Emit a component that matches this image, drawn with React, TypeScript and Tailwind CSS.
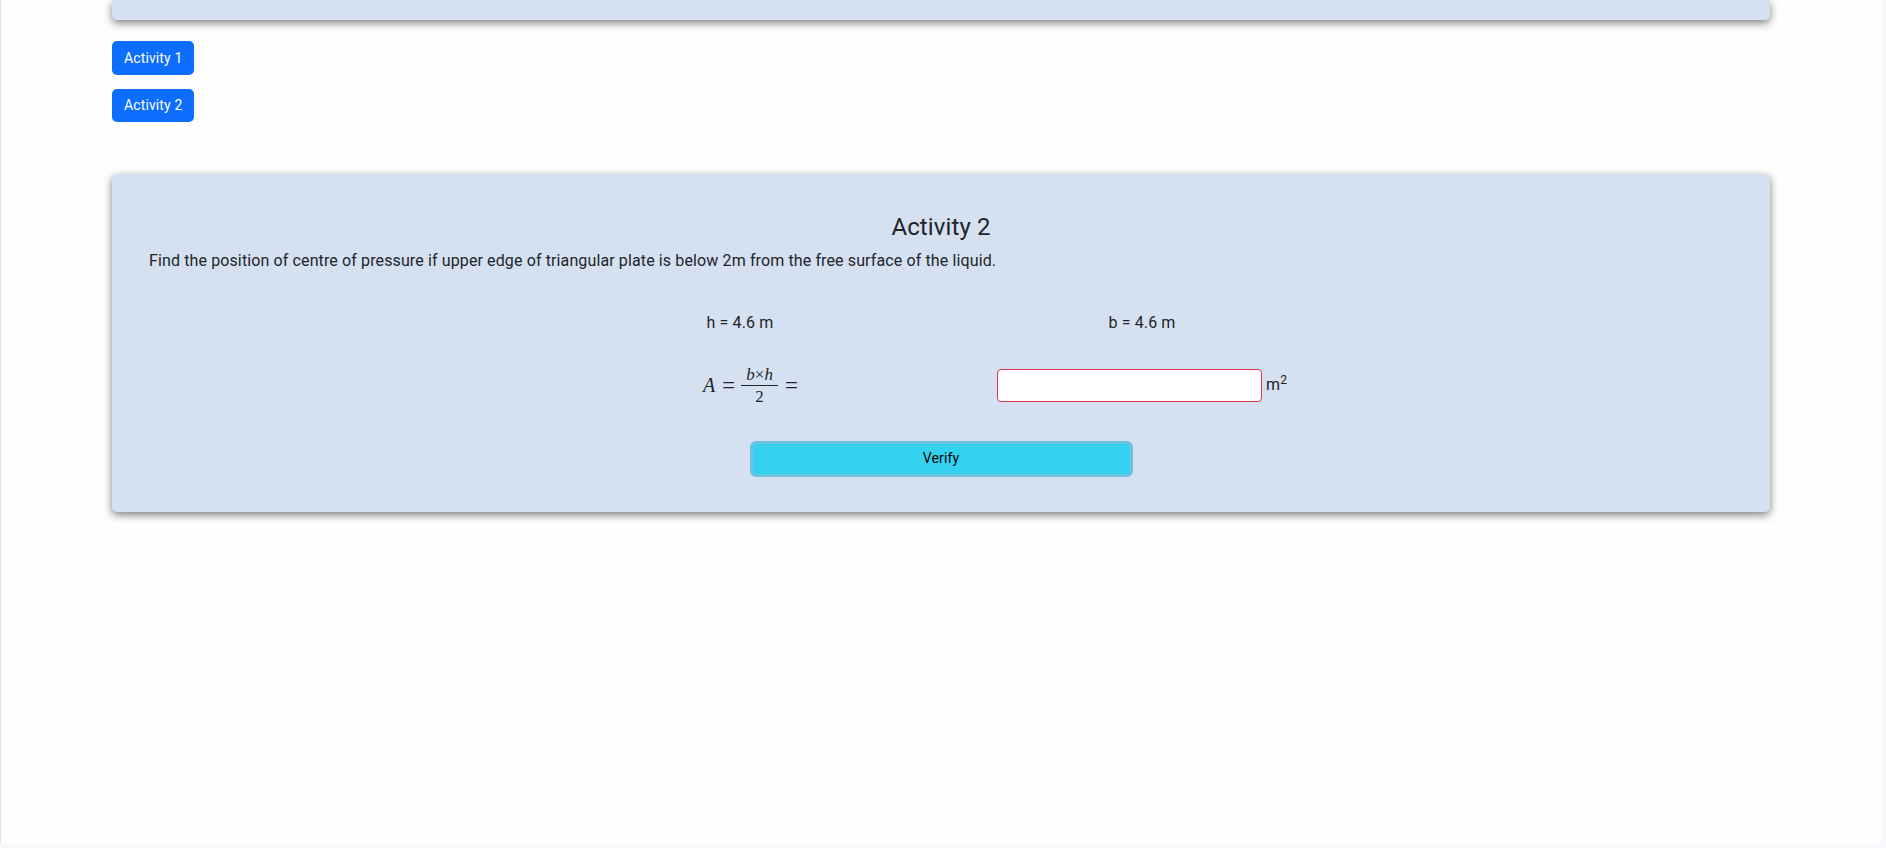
import React from "react";

export default function App() {
  return (
    <main className="min-h-screen bg-[#f7f8fc] font-['Roboto','Liberation_Sans',sans-serif] tracking-[0.12px] text-[#212529]">
      <div className="h-[843px] w-[1881px] overflow-hidden border-l border-[#dfe1e6] bg-[#fefefe]">
        <div className="px-[111px]">
          {/* previous activity card, scrolled mostly out of view */}
          <div className="h-[20px] rounded-b-[5px] bg-[#d5e0f1] shadow-[0_3px_8px_rgba(0,0,0,0.5)]" />

          {/* activity buttons */}
          <div className="mt-[21px] flex flex-col items-start gap-[14px]">
            <button className="h-[34px] rounded-[5px] bg-[#0d6efd] px-[12px] text-[14px] text-white">
              Activity 1
            </button>
            <button className="h-[33px] rounded-[5px] bg-[#0d6efd] px-[12px] text-[14px] text-white">
              Activity 2
            </button>
          </div>

          {/* activity 2 card */}
          <div className="mt-[52px] rounded-[5px] bg-[#d5e0f1] px-[37px] pt-[39px] pb-[35px] shadow-[0_3px_8px_rgba(0,0,0,0.5)]">
            <h3 className="text-center text-[24px] leading-[1.2] font-normal">
              Activity 2
            </h3>
            <p className="mt-[7px] text-[16px] leading-[24px]">
              Find the position of centre of pressure if upper edge of
              triangular plate is below 2m from the free surface of the liquid.
            </p>

            <div className="mx-auto mt-[38px] grid w-[804px] grid-cols-2 text-center text-[16px] leading-[24px]">
              <div>h = 4.6 m</div>
              <div>b = 4.6 m</div>

              <div className="mt-[31px] flex items-center justify-center">
                <span className="ml-[21px] inline-flex items-center font-['Liberation_Serif',serif] text-[20px] leading-none tracking-normal">
                  <i>A</i>
                  <span className="mr-[4px] ml-[7px] text-[23px]">=</span>
                  <span className="mx-[2px] inline-flex flex-col items-center">
                    <span className="px-[5px] text-[17px] leading-none">
                      <i>b</i>×<i>h</i>
                    </span>
                    <span className="my-[2px] h-px w-full bg-[#212529]" />
                    <span className="text-[17px] leading-none">2</span>
                  </span>
                  <span className="ml-[5px] text-[23px]">=</span>
                </span>
              </div>
              <div className="mt-[31px] flex items-center justify-center gap-[4px]">
                <input
                  type="text"
                  className="h-[33px] w-[265px] rounded-[4px] border border-[#dc3545] bg-white px-3 outline-none"
                />
                <span>
                  m<sup>2</sup>
                </span>
              </div>
            </div>

            <div className="mt-[36px] flex justify-center">
              <button className="h-[36px] w-[383px] rounded-[6px] border-[3px] border-[#6cc2dc] bg-[#33d2f0] text-[14px] text-black">
                Verify
              </button>
            </div>
          </div>
        </div>
      </div>
    </main>
  );
}
